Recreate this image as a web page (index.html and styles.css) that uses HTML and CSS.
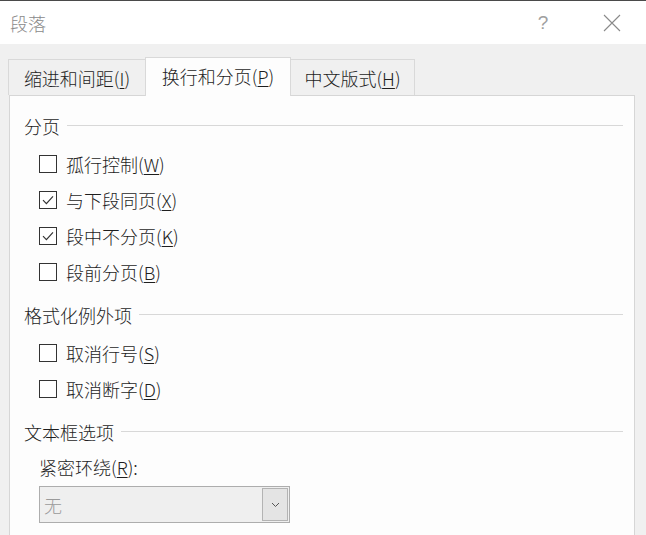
FILE: index.html
```html
<!DOCTYPE html>
<html lang="zh">
<head>
<meta charset="utf-8">
<title>段落</title>
<link rel="stylesheet" href="styles.css">
</head>
<body>
<div class="dialog">
  <header class="titlebar">
    <span class="title">段落</span>
    <span class="help">?</span>
    <svg class="close" width="18" height="18" viewBox="0 0 18 18"><path d="M1 1 L17 17 M17 1 L1 17" stroke="#8a8a8a" stroke-width="1.1" fill="none"/></svg>
  </header>
  <div class="body">
    <nav class="tabs">
      <div class="tab tab-1">缩进和间距(<u>I</u>)</div>
      <div class="tab tab-2 active">换行和分页(<u>P</u>)</div>
      <div class="tab tab-3">中文版式(<u>H</u>)</div>
    </nav>
    <section class="panel">
      <div class="group-head first"><span>分页</span><i class="rule"></i></div>
      <label class="row"><span class="box"></span>孤行控制(<u>W</u>)</label>
      <label class="row"><span class="box"><svg width="16" height="16" viewBox="0 0 16 16"><path d="M3 8.2 L6.4 11.6 L13 4.4" stroke="#333" stroke-width="1.2" fill="none"/></svg></span>与下段同页(<u>X</u>)</label>
      <label class="row"><span class="box"><svg width="16" height="16" viewBox="0 0 16 16"><path d="M3 8.2 L6.4 11.6 L13 4.4" stroke="#333" stroke-width="1.2" fill="none"/></svg></span>段中不分页(<u>K</u>)</label>
      <label class="row"><span class="box"></span>段前分页(<u>B</u>)</label>

      <div class="group-head"><span>格式化例外项</span><i class="rule"></i></div>
      <label class="row"><span class="box"></span>取消行号(<u>S</u>)</label>
      <label class="row"><span class="box"></span>取消断字(<u>D</u>)</label>

      <div class="group-head"><span>文本框选项</span><i class="rule"></i></div>
      <div class="field-label">紧密环绕(<u>R</u>):</div>
      <div class="select">
        <span class="select-value">无</span>
        <span class="select-btn"><svg width="9" height="6" viewBox="0 0 9 6"><path d="M1 1 L4.5 4.5 L8 1" stroke="#555" stroke-width="1" fill="none"/></svg></span>
      </div>
    </section>
  </div>
</div>
</body>
</html>
```

FILE: styles.css
```css
* { box-sizing: border-box; }

html, body {
  margin: 0;
  padding: 0;
  height: 100%;
  overflow: hidden;
}

body {
  background: #f0f0f0;
  font-family: "Microsoft YaHei", "Noto Sans CJK SC", "Noto Sans", sans-serif;
  font-size: 18px;
  font-weight: 300;
  color: #1e1e1e;
}

u {
  text-decoration-thickness: 1px;
  text-underline-offset: 2px;
}

.dialog {
  height: 100%;
  display: flex;
  flex-direction: column;
}

.titlebar {
  height: 44px;
  border-top: 1px solid #4a4a4a;
  background: #ffffff;
  display: flex;
  align-items: center;
  padding: 0 25px 0 10px;
}

.title {
  color: #8a8a8a;
  font-size: 18px;
  line-height: 1;
}

.help {
  margin-left: auto;
  color: #a0a0a0;
  font-family: "Liberation Sans", sans-serif;
  font-size: 19px;
  line-height: 1;
  width: 12px;
  text-align: center;
}

.close {
  margin-left: 54px;
  display: block;
}

.body {
  flex: 1;
  display: flex;
  flex-direction: column;
  padding: 13px 11px 0 9px;
}

.tabs {
  display: flex;
  align-items: flex-end;
  height: 38px;
  margin-left: -1px;
  position: relative;
  z-index: 1;
}

.tab {
  height: 36px;
  display: flex;
  align-items: center;
  justify-content: center;
  border: 1px solid #d9d9d9;
  border-bottom: none;
  background: #f0f0f0;
  color: #1e1e1e;
  font-size: 18px;
  white-space: nowrap;
}

.tab-1 { width: 137px; border-right: none; }
.tab-2 { width: 146px; }
.tab-3 { width: 124px; border-left: none; }

.tab.active {
  height: 39px;
  margin-bottom: -1px;
  background: #fdfdfd;
  padding-bottom: 3px;
}

.panel {
  flex: 1;
  background: #fdfdfd;
  border: 1px solid #d6d6d6;
  border-bottom: none;
  padding: 0 11px 0 14px;
  display: flex;
  flex-direction: column;
}

.group-head {
  height: 24px;
  margin-top: 13px;
  display: flex;
  align-items: center;
  line-height: 1;
  color: #1e1e1e;
}

.group-head.first { margin-top: 18px; }

.rule {
  flex: 1;
  height: 1px;
  margin-left: 7px;
  margin-top: -1px;
  background: #d8d8d8;
}

.group-head + .row { margin-top: 8px; }

.group-head + .field-label { margin-top: 11px; }

.row {
  height: 36px;
  display: flex;
  align-items: center;
  padding-left: 15px;
  line-height: 1;
  color: #1e1e1e;
}

.box {
  width: 18px;
  height: 18px;
  border: 1px solid #333333;
  background: #ffffff;
  margin-right: 9px;
  display: flex;
  align-items: center;
  justify-content: center;
  flex: none;
}

.box svg { display: block; }

.field-label {
  height: 24px;
  display: flex;
  align-items: center;
  padding-left: 15px;
  line-height: 1;
}

.select {
  margin: 7px 0 0 15px;
  width: 251px;
  height: 37px;
  border: 1px solid #adadad;
  background: #efefef;
  display: flex;
  align-items: stretch;
  padding: 1px;
}

.select-value {
  flex: 1;
  display: flex;
  align-items: center;
  padding-left: 3px;
  color: #9a9a9a;
  font-size: 18px;
  line-height: 1;
}

.select-btn {
  width: 26px;
  border: 1px solid #b3b3b3;
  background: #e4e4e4;
  display: flex;
  align-items: center;
  justify-content: center;
}

.select-btn svg { display: block; }
```
